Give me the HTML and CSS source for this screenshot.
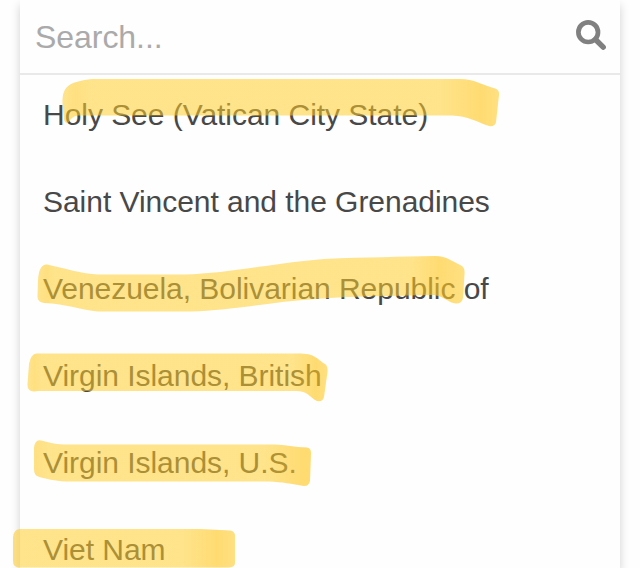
FILE: index.html
```html
<!DOCTYPE html>
<html lang="en">

<head>
    <meta charset="UTF-8">
    <meta name="viewport" content="width=device-width, initial-scale=1.0">
    <title>Country Search</title>
    <link rel="stylesheet" href="styles.css">
</head>

<body>

    <div class="dropdown">
        <div class="search">
            <span class="placeholder">Search...</span>
            <svg class="search-icon" viewBox="0 0 30 30">
                <circle cx="12.2" cy="12.2" r="9.8" />
                <path class="handle" d="M19.5 19.5L27.2 27.2" />
            </svg>
        </div>
        <ul class="countries">
            <li>Holy See (Vatican City State)</li>
            <li>Saint Vincent and the Grenadines</li>
            <li>Venezuela, Bolivarian Republic of</li>
            <li>Virgin Islands, British</li>
            <li>Virgin Islands, U.S.</li>
            <li>Viet Nam</li>
        </ul>
    </div>

    <!-- Highlighter strokes over the list -->
    <svg class="marker" viewBox="0 0 640 568">
        <defs>
            <linearGradient id="m1" gradientUnits="userSpaceOnUse" x1="62" x2="499" y1="0" y2="0">
                <stop offset="0" class="light" /><stop offset="0.03" class="mid" /><stop offset="0.07" class="light" />
                <stop offset="0.86" class="light" /><stop offset="0.96" class="dark" /><stop offset="1" class="mid" />
            </linearGradient>
            <linearGradient id="m2" gradientUnits="userSpaceOnUse" x1="37" x2="465" y1="0" y2="0">
                <stop offset="0" class="light" /><stop offset="0.025" class="mid" /><stop offset="0.04" class="light" />
                <stop offset="0.87" class="light" /><stop offset="0.94" class="dark" /><stop offset="1" class="mid" />
            </linearGradient>
            <linearGradient id="m3" gradientUnits="userSpaceOnUse" x1="27" x2="328" y1="0" y2="0">
                <stop offset="0" class="light" /><stop offset="0.025" class="mid" /><stop offset="0.05" class="light" />
                <stop offset="0.88" class="light" /><stop offset="0.96" class="dark" /><stop offset="1" class="mid" />
            </linearGradient>
            <linearGradient id="m4" gradientUnits="userSpaceOnUse" x1="33" x2="311" y1="0" y2="0">
                <stop offset="0" class="mid" /><stop offset="0.06" class="light" />
                <stop offset="0.83" class="light" /><stop offset="0.97" class="dark" />
            </linearGradient>
            <linearGradient id="m5" gradientUnits="userSpaceOnUse" x1="12" x2="235" y1="0" y2="0">
                <stop offset="0" class="mid" /><stop offset="0.05" class="light" />
                <stop offset="0.76" class="light" /><stop offset="0.92" class="dark" /><stop offset="1" class="mid" />
            </linearGradient>
        </defs>
        <path fill="url(#m1)" d="M62.500 104C62 85 70 82 92 79H460C474 79 482 85 495 88.500Q499.500 90 499 95L496 122Q495 127 489 126C477 122 468 116 452 115.500H78Q72 116 69 122Q66 125 64 120Z" />
        <path fill="url(#m2)" d="M38 280Q39 264 47 264.500C64 268 82 274 98 274.500H184C226 274 266 264 324 259C368 257 400 257 435 256C447 256 453 262 461 265.500Q465 267 464.500 274L463 298Q462 303.500 456 303.500C448 303 446 297 434 295C390 296 350 296 316 299C276 301 230 311 190 311.500H98C82 310 66 304 44 303Q37 302 37.500 296Z" />
        <path fill="url(#m3)" d="M29 364Q31 353 37 353.500H301C316 354 318 360 325 364Q328 366 327.500 372L324 397Q323 402 317 401C309 397 308 391 296 391H38L34 391.500Q27 391 27.500 384Z" />
        <path fill="url(#m4)" d="M34 448Q35 439 41 440.500C48 442 53 444 64 444.500H274C286 445 294 447 307 447.500Q311 448 311 453L310 481Q309 486 304 486C292 484 282 482 269 481.500H66C54 481 47 479 38 476.500Q34 475 34 469Z" />
        <path fill="url(#m5)" d="M13 537Q14 529 20 529H200L230 530.500Q235 531 235 536V563Q235 567 229 567.500H19Q13 567 13 561Z" />
    </svg>

</body>

</html>
```
FILE: styles.css
```css
* {
    box-sizing: border-box;
}

body {
    margin: 0;
    height: 568px;
    overflow: hidden;
    position: relative;
    background-color: #fefefe;
    font-family: "Liberation Sans", Arial, sans-serif;
    font-size: 30px;
    color: #484848;
}

.dropdown {
    display: flex;
    flex-direction: column;
    width: 600px;
    height: 568px;
    margin-left: 20px;
    background-color: #fefefe;
    box-shadow: 0 5px 9px rgba(0, 0, 0, 0.18);
}

.search {
    display: flex;
    flex: none;
    align-items: center;
    justify-content: space-between;
    height: 75px;
    padding: 2px 14px 0 15px;
    border-bottom: 2px solid #e9e9e9;
}

.placeholder {
    font-size: 32px;
    letter-spacing: -0.05px;
    color: #aaa;
}

.search-icon {
    width: 30px;
    height: 30px;
    margin-bottom: 5px;
    fill: none;
    stroke: #808080;
    stroke-width: 4.7;
}

.search-icon .handle {
    stroke-width: 5.4;
    stroke-linecap: round;
}

.countries {
    flex: 1;
    min-height: 0;
    margin: 0;
    padding: 0;
    overflow: hidden;
    list-style: none;
}

.countries li {
    display: flex;
    align-items: center;
    height: 87px;
    padding: 0 23px 8px;
    letter-spacing: -0.04px;
    white-space: nowrap;
}

.countries li:last-child {
    height: 79px;
    padding-bottom: 0;
}

.marker {
    position: absolute;
    top: 0;
    left: 0;
    width: 640px;
    height: 568px;
    filter: blur(0.7px);
}

.light {
    stop-color: #ffcd2a;
    stop-opacity: 0.54;
}

.mid {
    stop-color: #ffca26;
    stop-opacity: 0.58;
}

.dark {
    stop-color: #ffc722;
    stop-opacity: 0.64;
}
```
